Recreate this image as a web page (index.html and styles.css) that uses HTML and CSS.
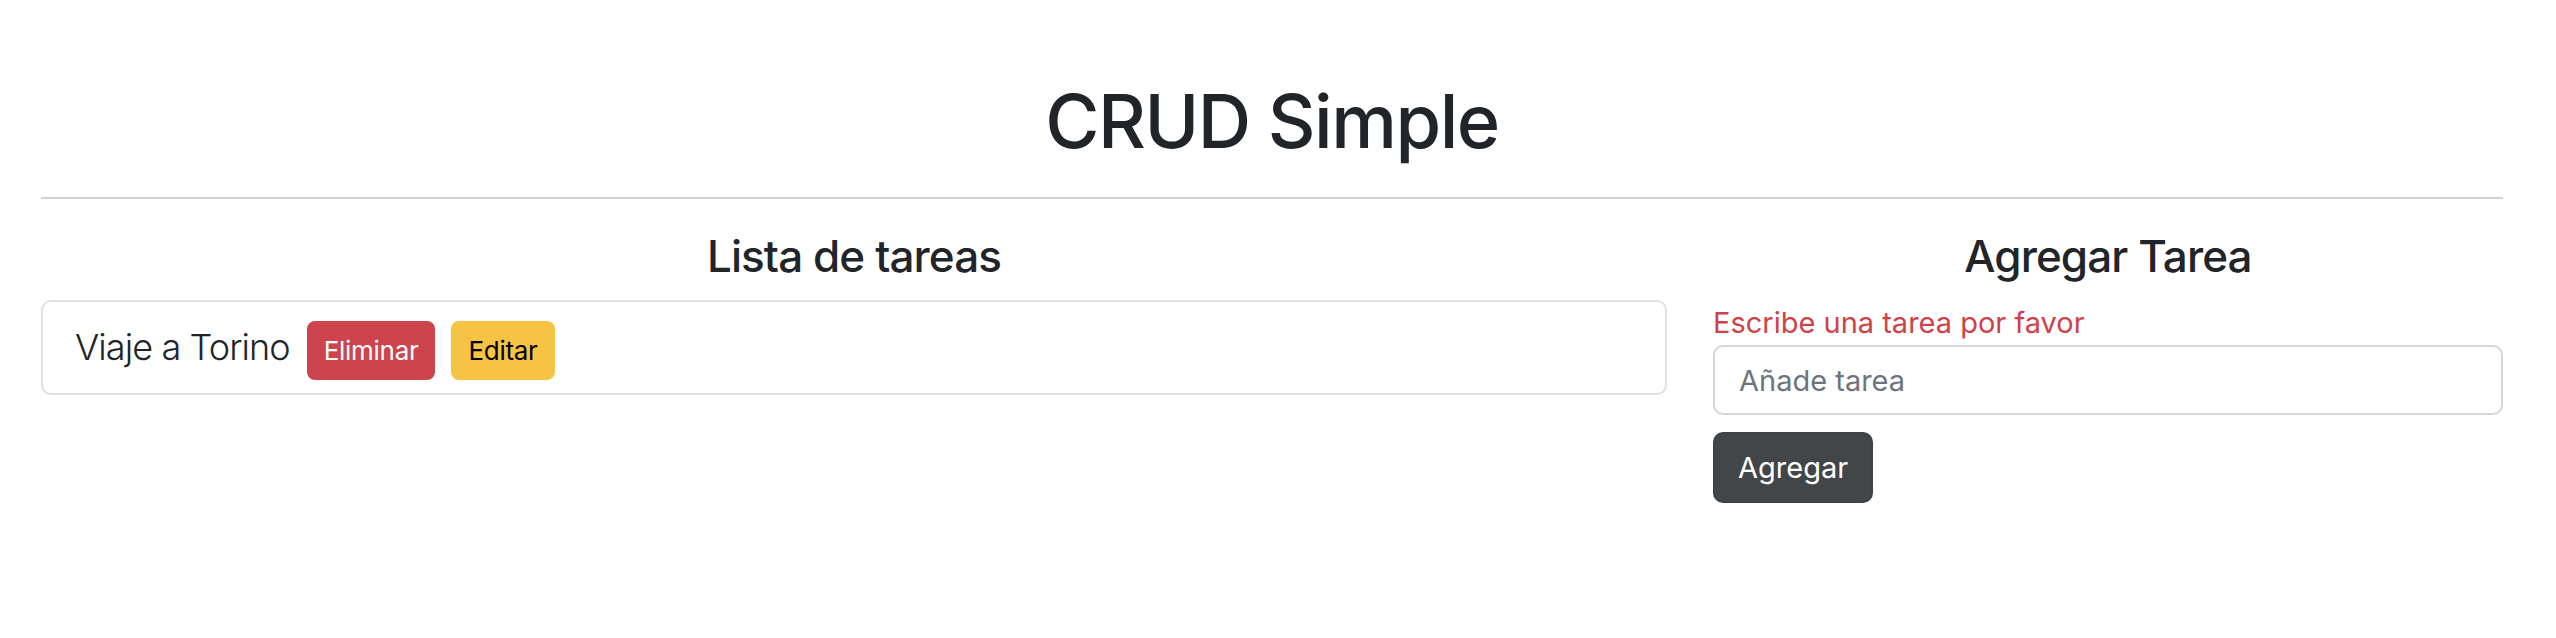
FILE: index.html
```html
<!DOCTYPE html>
<html lang="es">
<head>
<meta charset="utf-8">
<title>CRUD Simple</title>
<link rel="stylesheet" href="styles.css">
</head>
<body>
<div class="container">
  <h1 class="title">CRUD Simple</h1>
  <hr class="divider">
  <div class="row">
    <section class="col-list">
      <h3 class="section-title">Lista de tareas</h3>
      <ul class="list">
        <li class="list-item">
          <span class="lead">Viaje a Torino</span>
          <button class="btn btn-danger">Eliminar</button>
          <button class="btn btn-warning">Editar</button>
        </li>
      </ul>
    </section>
    <section class="col-form">
      <h3 class="section-title">Agregar Tarea</h3>
      <form class="form">
        <span class="error">Escribe una tarea por favor</span>
        <input class="input" type="text" placeholder="Añade tarea">
        <div><button class="btn-submit" type="button">Agregar</button></div>
      </form>
    </section>
  </div>
</div>
</body>
</html>
```

FILE: styles.css
```css
* { box-sizing: border-box; }
html, body { margin: 0; padding: 0; background: #fff; }
body {
  font-family: Inter, "Noto Sans", "Liberation Sans", sans-serif;
  color: #212529;
}
.container {
  width: 2462px;
  margin-left: 41px;
}
.title {
  margin: 77px 0 0;
  font-size: 74px;
  font-weight: 500;
  line-height: 1.2;
  text-align: center;
  letter-spacing: -1.5px;
}
.divider {
  margin: 31px 0 0;
  border: 0;
  border-top: 2px solid #d3d3d3;
  height: 0;
}
.row {
  display: grid;
  grid-template-columns: 1626fr 790fr;
  column-gap: 46px;
}
.section-title {
  margin: 31px 0 0;
  font-size: 44px;
  font-weight: 500;
  line-height: 1.2;
  text-align: center;
  letter-spacing: -0.9px;
}
.list {
  list-style: none;
  margin: 17px 0 0;
  padding: 0;
}
.list-item {
  display: flex;
  align-items: baseline;
  border: 2px solid #e1e1e1;
  border-radius: 10px;
  padding: 18px 32px 13px;
}
.lead {
  font-size: 36px;
  font-weight: 300;
  line-height: 1.5;
  letter-spacing: -0.9px;
}
.btn {
  font-family: inherit;
  font-size: 26px;
  line-height: 1.5;
  padding: 8px 15px;
  border: 2px solid transparent;
  border-radius: 8px;
  font-weight: 400;
  letter-spacing: -0.3px;
}
.btn-danger {
  margin-left: 17px;
  background: #cd444c;
  border-color: #cd444c;
  color: #fff;
}
.btn-warning {
  margin-left: 16px;
  background: #f7c344;
  border-color: #f7c344;
  color: #000;
}
.form {
  margin: 18px 0 0;
  display: flex;
  flex-direction: column;
}
.error {
  font-size: 29px;
  line-height: 1.5;
  color: #cf424a;
}
.input {
  margin-top: 1px;
  width: 100%;
  height: 70px;
  font-family: inherit;
  font-size: 29px;
  line-height: 1.5;
  padding: 11px 24px;
  border: 2px solid #d4d8dc;
  border-radius: 10px;
  color: #212529;
}
.input::placeholder { color: #6c757d; }
.btn-submit {
  margin-top: 17px;
  font-family: inherit;
  font-size: 29px;
  line-height: 1.5;
  padding: 11px 23px;
  height: 71px;
  border: 2px solid #3f4245;
  border-radius: 10px;
  background: #434649;
  color: #fff;
}
```
